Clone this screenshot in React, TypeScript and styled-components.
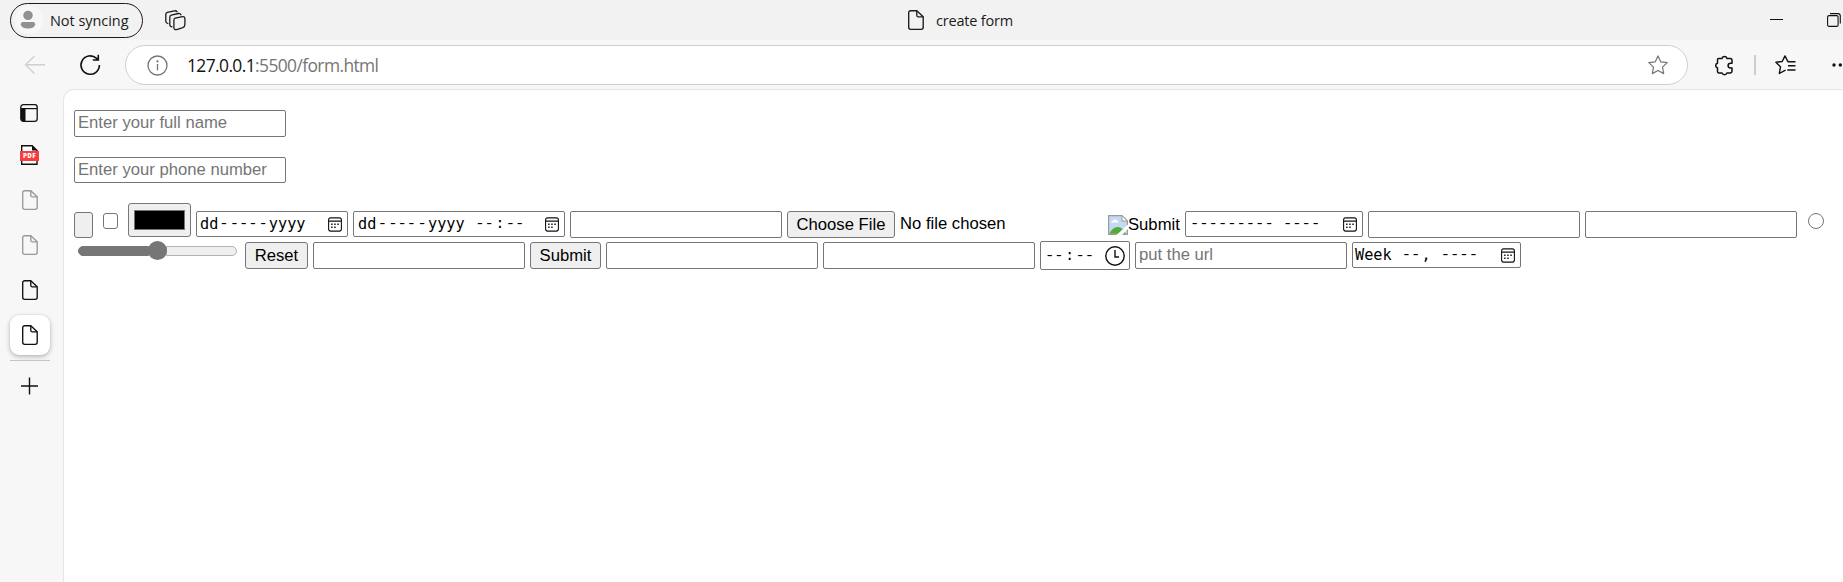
import React from 'react';
import styled, { createGlobalStyle } from 'styled-components';

const GlobalStyle = createGlobalStyle`
  * { box-sizing: border-box; }
  body { margin: 0; background: #f7f7f7; overflow: hidden; }
  svg { display: block; flex: none; }
`;

const Browser = styled.div`
  width: 100vw;
  height: 100vh;
  overflow: hidden;
  display: flex;
  flex-direction: column;
  background: #f7f7f7;
  font-family: 'Open Sans', 'Noto Sans', sans-serif;
  color: #1b1b1b;
`;

const TitleBar = styled.header`
  height: 40px;
  flex: none;
  display: grid;
  grid-template-columns: 906px 1fr 82px;
  align-items: center;
  background: #f2f2f2;
`;

const TitleLeft = styled.div`
  display: flex;
  align-items: center;
  gap: 22px;
  padding-left: 10px;
`;

const ProfilePill = styled.div`
  width: 133px;
  height: 35px;
  border: 1px solid #1b1b1b;
  border-radius: 18px;
  display: flex;
  align-items: center;
  gap: 7px;
  padding-left: 4px;
  font-size: 14.5px;
  letter-spacing: -0.05px;
  white-space: nowrap;
`;

const Avatar = styled.div`
  width: 28px;
  height: 28px;
  border-radius: 50%;
  background: #f7f7f7;
`;

const PageTitle = styled.div`
  display: flex;
  align-items: center;
  gap: 12px;
  font-size: 14.5px;
  letter-spacing: -0.2px;
  padding-left: 2px;
`;

const WindowButtons = styled.div`
  display: flex;
  gap: 44px;
  padding-left: 9px;
  overflow: hidden;
`;

const Toolbar = styled.div`
  height: 49px;
  flex: none;
  display: flex;
  align-items: center;
  padding: 1px 0 0 24px;
  overflow: hidden;
`;

const Reload = styled.div`
  margin: 0 24px 0 34px;
`;

const AddressBar = styled.div`
  width: 1563px;
  height: 40px;
  flex: none;
  border: 1px solid #cfcfcf;
  border-radius: 20px;
  background: #fff;
  display: flex;
  align-items: center;
  padding: 0 19px 0 21px;
`;

const Url = styled.div`
  flex: 1;
  margin-left: 19px;
  padding-bottom: 1px;
  font-size: 17.4px;
  letter-spacing: -0.59px;
  color: #757575;
  span { color: #111; }
`;

const ToolbarActions = styled.div`
  display: flex;
  align-items: center;
  flex: none;
  padding-left: 26px;
`;

const Divider = styled.div`
  width: 2px;
  height: 20px;
  background: #cdcdcd;
  margin: 0 19px 0 20px;
`;

const More = styled.div`
  margin-left: 35px;
`;

const Body = styled.div`
  flex: 1;
  display: flex;
  min-height: 0;
`;

const Sidebar = styled.nav`
  width: 63px;
  flex: none;
  display: flex;
  flex-direction: column;
  align-items: flex-start;
`;

const SideTab = styled.div<{ $active?: boolean; $top?: number }>`
  width: 40px;
  height: 40px;
  margin: ${p => p.$top ?? 5}px 0 0 10px;
  border-radius: 9px;
  display: flex;
  align-items: center;
  justify-content: center;
  background: ${p => (p.$active ? '#fff' : 'transparent')};
  box-shadow: ${p => (p.$active ? '0 2px 5px rgba(0,0,0,.24), 0 0 2px rgba(0,0,0,.12)' : 'none')};
`;

const SideRule = styled.div`
  width: 40px;
  height: 1px;
  margin: 5px 0 0 10px;
  background: #c4c4c4;
`;

const Page = styled.main`
  flex: 1;
  min-width: 0;
  overflow: hidden;
  background: #fff;
  border: 1px solid #e6e6e6;
  border-width: 1px 0 0 1px;
  border-radius: 11px 0 0 0;
  padding: 20px 0 0 10px;
  font: 16.67px/20px 'Liberation Sans', Arial, sans-serif;
  color: #000;
`;

const Row = styled.div<{ $height: number }>`
  display: flex;
  align-items: flex-start;
  gap: 5px;
  height: ${p => p.$height}px;
`;

const Field = styled.input<{ $top?: number; $h?: number }>`
  width: 212px;
  height: ${p => p.$h ?? 27}px;
  margin: ${p => p.$top ?? 0}px 0 0;
  flex: none;
  padding: 0 4px ${p => (p.$h ? 0 : 1)}px 3px;
  border: 1px solid #767676;
  border-radius: 2px;
  background: #fff;
  outline: none;
  font: 16.67px 'Liberation Sans', Arial, sans-serif;
  &::placeholder { color: #757575; opacity: 1; }
`;

const PushButton = styled.button<{ $w: number; $top?: number; $h?: number }>`
  width: ${p => p.$w}px;
  height: ${p => p.$h ?? 27}px;
  margin: ${p => p.$top ?? 0}px 0 0;
  flex: none;
  padding: 0;
  border: 1px solid #767676;
  border-radius: 3px;
  background: #efefef;
  color: #000;
  white-space: nowrap;
  font: 16.67px 'Liberation Sans', Arial, sans-serif;
`;

const Checkbox = styled.div`
  width: 15px;
  height: 16px;
  margin: 10px 5px 0;
  border: 1px solid #767676;
  border-radius: 3px;
  flex: none;
`;

const Radio = styled.div`
  width: 16px;
  height: 16px;
  margin: 10px 0 0 6px;
  border: 1px solid #767676;
  border-radius: 50%;
  flex: none;
`;

const ColorWell = styled.div`
  width: 63px;
  height: 34px;
  padding: 6px 5px;
  border: 1px solid #767676;
  border-radius: 3px;
  background: #efefef;
  flex: none;
`;

const Swatch = styled.div`
  height: 20px;
  background: #000;
  border: 1px solid #767676;
`;

const Picker = styled.div<{ $w: number; $top?: number; $h?: number; $pad?: number; $left?: number }>`
  width: ${p => p.$w}px;
  height: ${p => p.$h ?? 26}px;
  margin-top: ${p => p.$top ?? 8}px;
  padding: 0 ${p => p.$pad ?? 5}px 0 ${p => p.$left ?? 3}px;
  flex: none;
  display: flex;
  align-items: center;
  justify-content: space-between;
  border: 1px solid #767676;
  border-radius: 2px;
  font: 15.22px/20px 'DejaVu Sans Mono', 'Liberation Mono', monospace;
  white-space: pre;
`;

const Parts = styled.div<{ $gap?: number }>`
  display: flex;
  gap: ${p => p.$gap ?? 1.3}px;
`;

const Dashes = styled.span`
  font-family: 'Liberation Mono', monospace;
  font-size: 15.5px;
`;

const FileInput = styled.div`
  width: 316px;
  display: flex;
  gap: 5px;
  margin-top: 8px;
  flex: none;
  span { line-height: 25px; }
`;

const ImageSubmit = styled.div`
  width: 72px;
  margin-top: 10px;
  display: flex;
  flex: none;
  line-height: 23px;
  svg { margin-top: 2px; }
`;

const Range = styled.div`
  width: 159px;
  height: 19px;
  margin: 0 3px 0 4px;
  display: flex;
  align-items: center;
  flex: none;
`;

const Track = styled.div<{ $filled?: boolean }>`
  flex: 1;
  height: 10px;
  border: 1px solid ${p => (p.$filled ? '#767676' : '#b2b2b2')};
  background: ${p => (p.$filled ? '#767676' : '#efefef')};
  border-radius: ${p => (p.$filled ? '5px 0 0 5px' : '0 5px 5px 0')};
`;

const Thumb = styled.div`
  width: 19px;
  height: 19px;
  margin: 0 -1px;
  z-index: 1;
  border-radius: 50%;
  background: #767676;
`;

const FileIcon = ({ color = '#1b1b1b' }: { color?: string }) => (
  <svg width="16" height="20" viewBox="0 0 16 20" fill="none" stroke={color} strokeWidth="1.35" strokeLinejoin="round">
    <path d="M2.7 .7H8.8L15.2 6.8V17.3A2 2 0 0 1 13.2 19.3H2.7A2 2 0 0 1 .7 17.3V2.7A2 2 0 0 1 2.7 .7Z" />
    <path d="M8.8 .7V5.4A1.4 1.4 0 0 0 10.2 6.8H15.2" />
  </svg>
);

const PdfIcon = () => (
  <svg width="21" height="20" viewBox="0 0 21 20">
    <path d="M1.7 6V.7H12.2L17 5.5V6M1.7 15V19.3H17V15" fill="#fff" stroke="#111" strokeWidth="1.4" />
    <path d="M12 .7V5.5H17Z" fill="#111" />
    <rect y="6" width="19" height="10" fill="#fa3e3e" />
    <text x="9.5" y="13.3" textAnchor="middle" fontFamily="Open Sans, sans-serif" fontSize="6.2" letterSpacing=".4" fontWeight="800" fill="#fff">PDF</text>
  </svg>
);

const CalendarIcon = () => (
  <svg width="14" height="15" viewBox="0 0 14 15" fill="none" stroke="#111" strokeWidth="1.1">
    <rect x=".6" y=".9" width="12.8" height="13.2" rx="2" />
    <path d="M.6 4.1H13.4" />
    <g fill="#333" stroke="none">
      <path d="M3 6.6h1.7v1.5H3zM6.1 6.6h1.7v1.5H6.1zM9.2 6.6h1.7v1.5H9.2zM3 9.6h1.7v1.5H3zM6.1 9.6h1.7v1.5H6.1z" />
    </g>
  </svg>
);

const STAR = 'M10 .9L12.75 6.8 19.2 7.6 14.5 12.1 15.7 18.6 10 15.5 4.3 18.6 5.5 12.1 .8 7.6 7.25 6.8Z';

export default function App() {
  return (
    <>
      <GlobalStyle />
      <Browser>
        <TitleBar>
          <TitleLeft>
            <ProfilePill>
              <Avatar>
                <svg width="28" height="28" fill="#919191">
                  <circle cx="13" cy="9.4" r="4.7" />
                  <path d="M8 16H18Q20.2 16 20.2 18.3Q19.5 22.6 13 22.6Q6.5 22.6 5.8 18.3Q5.8 16 8 16Z" />
                </svg>
              </Avatar>
              Not syncing
            </ProfilePill>
            <svg width="21" height="21" viewBox="0 0 21 21" fill="none" stroke="#1b1b1b" strokeWidth="1.3" strokeLinejoin="round" strokeLinecap="round">
              <path d="M10.2 8.2L17.5 6.6Q19.7 6.3 19.9 8.5V14.5Q19.9 16.8 17.8 17.6L11.7 19.6Q9.1 20.1 8.9 17.8V10.2Q8.9 8.6 10.2 8.2Z" />
              <path d="M7 16.8Q4.8 16.6 4.8 14.8V7.2Q4.8 5.6 6.2 5.2L13.4 3.5Q15.2 3.1 15.9 4.8" />
              <path d="M2.8 13.5Q.8 12.8 .8 11.5V4.3Q.8 2.9 2.3 2.4L9.5 .8Q11.2 .5 12 1.7" />
            </svg>
          </TitleLeft>
          <PageTitle><FileIcon />create form</PageTitle>
          <WindowButtons>
            <svg width="13" height="14"><path d="M0 6.5H13" stroke="#111" /></svg>
            <svg width="14" height="14" fill="none" stroke="#111" strokeWidth="1.1">
              <rect x=".6" y="2.6" width="10.5" height="10.8" rx="1.5" />
              <path d="M3 .6H11Q13.3 .6 13.3 3V10.5" />
            </svg>
          </WindowButtons>
        </TitleBar>

        <Toolbar>
          <svg width="21" height="20" viewBox="0 0 21 20" fill="none" stroke="#d0d0d0" strokeWidth="1.4"><path d="M10.4 1.2L1.5 9.8 10.4 18.4M1.5 9.8H21" /></svg>
          <Reload>
            <svg width="22" height="22" viewBox="0 0 22 22" fill="none" stroke="#111" strokeWidth="1.6">
              <path d="M20.4 11A9.2 9.2 0 1 1 17.3 4.2L19 5.9M19.3 .8V6H13.8" />
            </svg>
          </Reload>
          <AddressBar>
            <svg width="21" height="21" viewBox="0 0 21 21" fill="none" stroke="#757575" strokeWidth="1.3">
              <circle cx="10.5" cy="10.5" r="9.5" /><path d="M10.5 9V15.3" /><circle cx="10.5" cy="6.3" r=".5" fill="#757575" />
            </svg>
            <Url><span>127.0.0.1</span>:5500/form.html</Url>
            <svg width="20" height="20" viewBox="0 0 20 20" fill="none" stroke="#757575" strokeWidth="1.2" strokeLinejoin="round"><path d={STAR} /></svg>
          </AddressBar>
          <ToolbarActions>
            <svg width="20" height="21" viewBox="0 0 20 21" fill="none" stroke="#111" strokeWidth="1.5" strokeLinejoin="round">
              <path d="M4.6 3.5H8A2.6 2.6 0 0 1 13 3.5H16.3Q18 3.5 18 5.2V8.2H16.5A2.4 2.4 0 0 0 16.5 13H18V16.2Q18 17.9 16.3 17.9H13A2.6 2.6 0 0 1 8 17.9H4.6Q3.5 17.9 3.5 16.2V13A2.5 2.5 0 0 1 3.5 8.2V5.2Q3.5 3.5 4.6 3.5Z" />
            </svg>
            <Divider />
            <svg width="21" height="20" viewBox="0 0 21 20" fill="none" stroke="#111" strokeWidth="1.4" strokeLinejoin="round">
              <path d="M14 6.5H12.8L10 .9 7.2 6.5 .9 7.3 5.5 11.8 4.3 18.5 10.5 15.2M12.5 6.7H20.5M13 10.8H20.5M12.3 15H20.5" />
            </svg>
            <More><svg width="18" height="6" fill="#111"><circle cx="3" cy="3" r="1.7" /><circle cx="9.3" cy="3" r="1.7" /><circle cx="15.6" cy="3" r="1.7" /></svg></More>
          </ToolbarActions>
        </Toolbar>

        <Body>
          <Sidebar>
            <SideTab $top={4}>
              <svg width="20" height="18" viewBox="0 0 20 18">
                <path d="M1 5H5.5V17H3Q1 17 1 15Z" fill="#111" />
                <rect x=".8" y=".7" width="16.4" height="16.6" rx="2.5" fill="none" stroke="#111" strokeWidth="1.3" />
                <path d="M1 4.6H17" stroke="#111" strokeWidth="1.2" />
              </svg>
            </SideTab>
            <SideTab $top={2}><PdfIcon /></SideTab>
            <SideTab><FileIcon color="#999" /></SideTab>
            <SideTab><FileIcon color="#999" /></SideTab>
            <SideTab><FileIcon color="#111" /></SideTab>
            <SideTab $active><FileIcon color="#111" /></SideTab>
            <SideRule />
            <SideTab>
              <svg width="19" height="18"><path d="M8.5 .5V17.5M0 9H17" stroke="#111" strokeWidth="1.4" /></svg>
            </SideTab>
          </Sidebar>

          <Page>
            <Row $height={47}><Field placeholder="Enter your full name" /></Row>
            <Row $height={46}><Field $h={26} placeholder="Enter your phone number" /></Row>
            <Row $height={38}>
              <PushButton $w={19} $top={9} $h={26} />
              <Checkbox />
              <ColorWell><Swatch /></ColorWell>
              <Picker $w={152}>
                <Parts $gap={1}><span>dd</span><Dashes>-</Dashes><Dashes>---</Dashes><Dashes>-</Dashes><span>yyyy</span></Parts><CalendarIcon />
              </Picker>
              <Picker $w={212} $left={4}>
                <Parts><span>dd</span><Dashes>-</Dashes><Dashes>---</Dashes><Dashes>-</Dashes><span>yyyy</span><Dashes> --</Dashes><Dashes>:</Dashes><Dashes>--</Dashes></Parts><CalendarIcon />
              </Picker>
              <Field $top={8} />
              <FileInput><PushButton $w={108}>Choose File</PushButton><span>No file chosen</span></FileInput>
              <ImageSubmit>
                <svg width="20" height="20" viewBox="0 0 20 20">
                  <path d="M.6 .6H14L19.4 6V19.4H.6Z" fill="#c5d9f7" stroke="#9b9b9b" strokeWidth="1.2" />
                  <path d="M14 .6V6H19.4Z" fill="#fff" stroke="#9b9b9b" />
                  <path d="M3 7.5Q3 5.8 5 5.8Q6 3.5 8 5Q10.5 5.5 10 7.5Z" fill="#fff" />
                  <path d="M1.2 18.8Q5 11.5 10 12Q15 12.5 18 18.8Z" fill="#55ab38" />
                  <path d="M8.5 20L20 9.5V14L14 20Z" fill="#fff" />
                </svg>
                Submit
              </ImageSubmit>
              <Picker $w={178} $left={4}><Parts><Dashes>--------- ----</Dashes></Parts><CalendarIcon /></Picker>
              <Field $top={8} />
              <Field $top={8} />
              <Radio />
            </Row>
            <Row $height={30}>
              <Range><Track $filled /><Thumb /><Track /></Range>
              <PushButton $w={63} $top={1}>Reset</PushButton>
              <Field $top={1} />
              <PushButton $w={71} $top={1}>Submit</PushButton>
              <Field $top={1} />
              <Field $top={1} />
              <Picker $w={90} $top={0} $h={29} $pad={4} $left={4}>
                <Parts><Dashes>--</Dashes><Dashes>:</Dashes><Dashes>--</Dashes></Parts>
                <svg width="20" height="20" fill="none" stroke="#111" strokeWidth="1.4"><circle cx="10" cy="10" r="9.2" /><path d="M10 4V11H14" /></svg>
              </Picker>
              <Field $top={1} placeholder="put the url" />
              <Picker $w={169} $top={1} $left={2}><Parts $gap={1}><span>Week </span><Dashes>--</Dashes><span>, </span><Dashes>----</Dashes></Parts><CalendarIcon /></Picker>
            </Row>
          </Page>
        </Body>
      </Browser>
    </>
  );
}
